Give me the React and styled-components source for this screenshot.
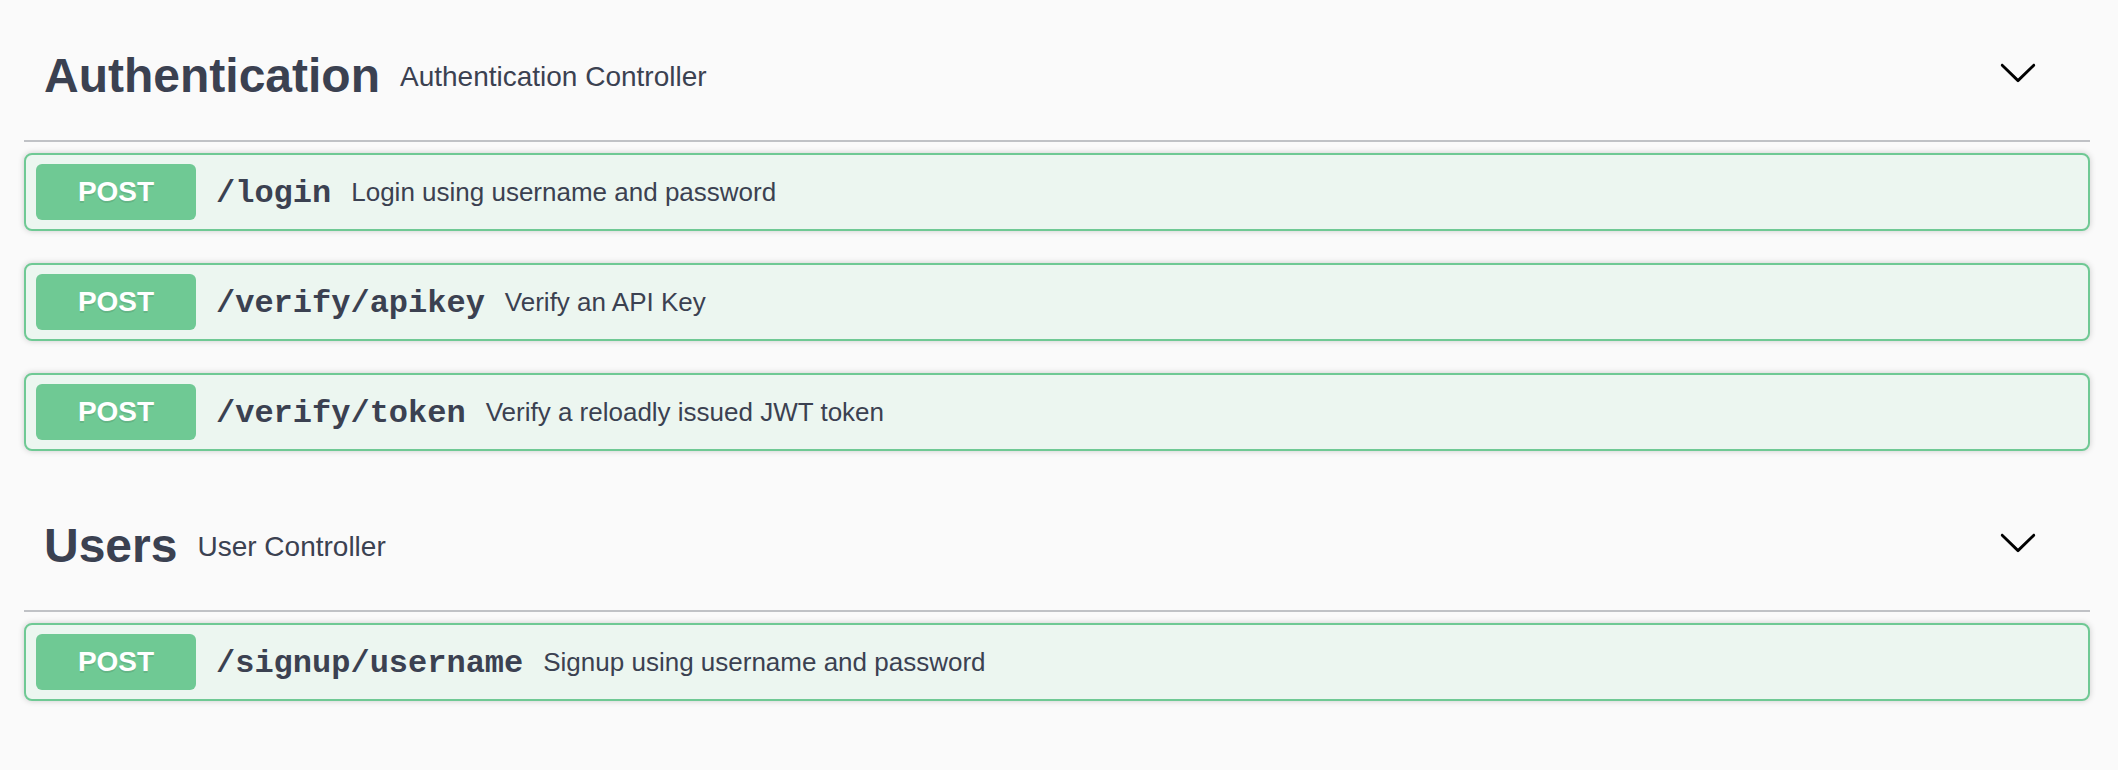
import React from "react";
import styled, { createGlobalStyle } from "styled-components";

const GlobalStyle = createGlobalStyle`
    html, body {
        margin: 0;
        padding: 0;
        background: #fafafa;
    }
`

const Page = styled.div`
    min-height: 100vh;
    box-sizing: border-box;
    padding: 13px 28px 0 24px;
    background: #fafafa;
    font-family: "Liberation Sans", Arial, sans-serif;
    color: #3b4151;
`

const TagSection = styled.section`
    display: flex;
    flex-direction: column;
`

const TagHeader = styled.h3`
    display: flex;
    align-items: center;
    margin: 0 0 11px;
    padding: 35px 52px 36px 20px;
    border-bottom: 2px solid rgba(59, 65, 81, 0.3);
    color: #3b4151;
    cursor: pointer;
`

const TagName = styled.span`
    font-size: 48px;
    font-weight: 700;
    line-height: 56px;
`

const TagDescription = styled.small`
    flex: 1;
    padding: 1px 20px 0;
    font-size: 28px;
    font-weight: 400;
    line-height: 32px;
`

const ExpandButton = styled.button`
    display: flex;
    padding: 0;
    margin: 0 0 9px;
    border: none;
    background: none;
    color: #000;
    cursor: pointer;
`

const OpBlock = styled.div`
    display: flex;
    align-items: center;
    height: 78px;
    box-sizing: border-box;
    margin: 0 0 32px;
    padding: 9px 10px;
    border: 2px solid #6fc994;
    border-radius: 8px;
    background: #ecf6f0;
    box-shadow: 0 0 6px rgba(0, 0, 0, 0.19);
    cursor: pointer;
`

const Method = styled.span`
    display: flex;
    align-items: center;
    justify-content: center;
    min-width: 160px;
    height: 56px;
    border-radius: 6px;
    background: #6fc994;
    color: #fff;
    font-size: 28px;
    font-weight: 700;
    line-height: 32px;
    text-shadow: 0 2px 0 rgba(0, 0, 0, 0.1);
`

const Path = styled.span`
    padding: 2px 20px 0;
    font-family: "Liberation Mono", "Courier New", monospace;
    font-size: 32px;
    font-weight: 700;
    color: #3b4151;
`

const Summary = styled.span`
    padding-top: 1px;
    font-size: 26px;
    color: #3b4151;
`

const Chevron = () => (
    <svg width="40" height="40" viewBox="0 0 20 20" fill="currentColor">
        <path d="M17.418 6.109c.272-.268.709-.268.979 0s.271.701 0 .969l-7.908 7.83c-.27.268-.707.268-.979 0l-7.908-7.830c-.27-.268-.27-.701 0-.969.271-.268.709-.268.979 0L10 13.25l7.418-7.141z" />
    </svg>
)

const tags = [
    {
        name: "Authentication",
        description: "Authentication Controller",
        ops: [
            { method: "POST", path: "/login", summary: "Login using username and password" },
            { method: "POST", path: "/verify/apikey", summary: "Verify an API Key" },
            { method: "POST", path: "/verify/token", summary: "Verify a reloadly issued JWT token" },
        ],
    },
    {
        name: "Users",
        description: "User Controller",
        ops: [
            { method: "POST", path: "/signup/username", summary: "Signup using username and password" },
        ],
    },
]

const App = () => {
    return (
        <>
            <GlobalStyle />
            <Page>
                {tags.map((tag) => (
                    <TagSection key={tag.name}>
                        <TagHeader>
                            <TagName>{tag.name}</TagName>
                            <TagDescription>{tag.description}</TagDescription>
                            <ExpandButton aria-label="collapse">
                                <Chevron />
                            </ExpandButton>
                        </TagHeader>
                        {tag.ops.map((op) => (
                            <OpBlock key={op.path}>
                                <Method>{op.method}</Method>
                                <Path>{op.path}</Path>
                                <Summary>{op.summary}</Summary>
                            </OpBlock>
                        ))}
                    </TagSection>
                ))}
            </Page>
        </>
    )
}

export default App;
